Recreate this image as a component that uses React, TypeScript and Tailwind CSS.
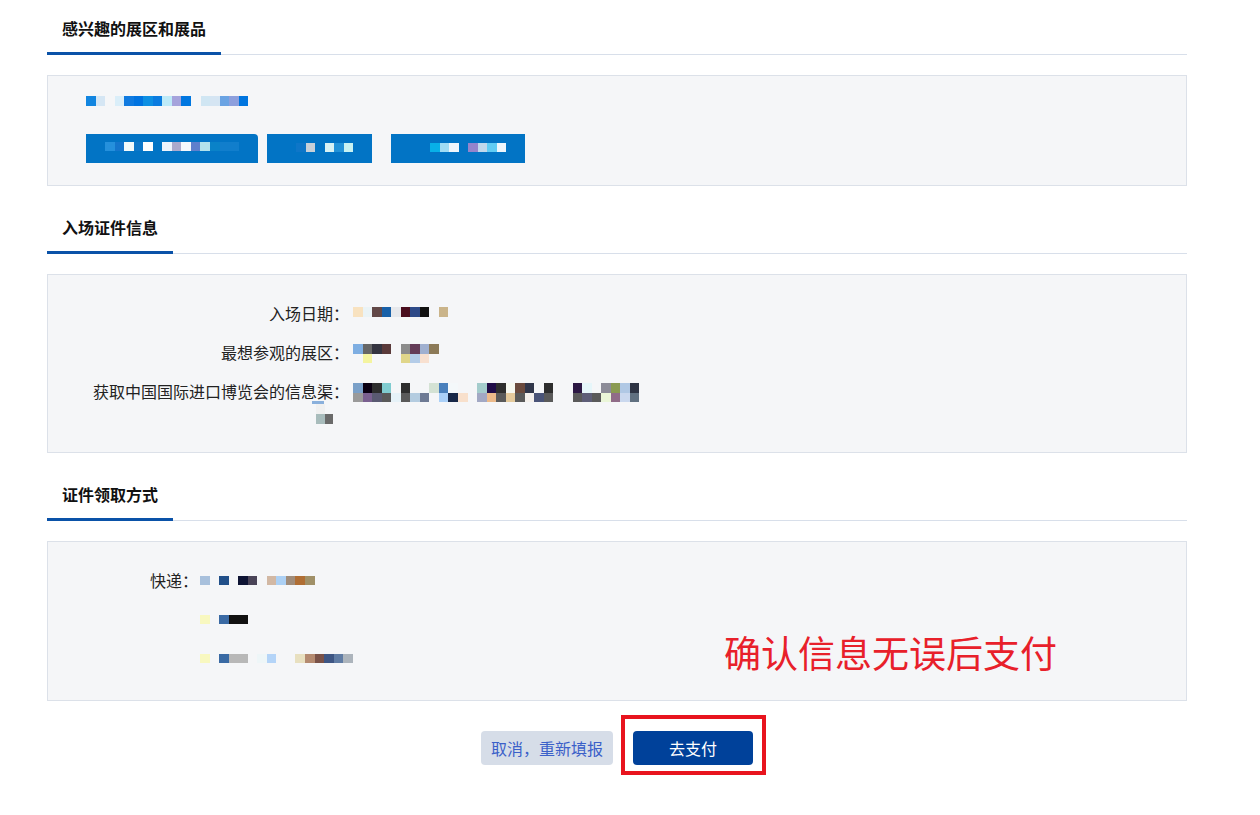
import type { ReactNode } from 'react';

// Pixelated (mosaic) content blocks, one string per row: colours split by spaces, '-' = empty cell
const INTEREST_ROW = [
  '#1185e0 #d5e6f4 - #daeef9 #0f7ae0 #0073e0 #0d8fe3 #0a7ce0 #bdeaf8 #a5a3dc #0077e0 - #d0e6f3 #d5e5f3 #6aa3e3 #8d9fdd #0075df',
];

const TAGS = [
  { w: 172, pl: 19, pt: 8, rows: ['#2590dc #1475cc #f3fafa #0e77c8 #ffffff - #eef4fc #aca9cc #f5f8fc #5f7fcc #b2e2ec #0a82c8 #117ecc #117ecc'] },
  { w: 105, pl: 29, pt: 9, rows: ['#0e76c8 #c8d0d8 - #d8f2f4 #2292d8 #c8f2f2'] },
  { w: 134, pl: 39, pt: 9, rows: ['#08b0e8 #a0dcf4 #f0f6fc - #9484cc #c0d8ec #60ccf4 #eef6fc'] },
];

const DATE_ROWS = ['#f8e2c0 #eaf3f6 #624848 #1860a8 #e6e8ec #4a0e1e #2e4a88 #111111 - #cab48a'];

const ZONE_ROWS = [
  '#7eaee2 #666666 #343440 #5a3a3a - #8c8c8c #643c58 #a0b0d0 #8c7a58',
  '- #f4f4a0 - - - #e0d68a #b4cce8 #f8e0d0',
];

const CHANNEL_ROWS = [
  '#7aa0c8 #0a0012 #2e2e2e #80ccd0 - #2e2e2e - - #d4e2d4 #4a80bc #f4f8fa - - #a4cccc #200c48 #2e2e2e #f6f8f0 #6a4a3e #30364a - #2e2e2e - - #2c1844 #e6f6fa - #8c8c98 #8a9a52 #b0c8e4 #2e3444',
  '#9a9a9a #7a6090 #5a5a72 #5a5a5a #e6f2f8 #5a5a5a #b4cce0 #6e7a94 - #aad0f8 #182848 #f8e0cc - #a2a8c4 #ecba8a #5a5a5a #e4ca9c #5a5a5a #f4f0ec #4a5478 #5a5a5a - - #5a5a5a #5e5e78 #5a5a5a #eaf6d8 #906c88 #cad8ee #607080',
];

const EXPRESS_ROWS = [
  ['#a8c0dc - #22508a - #0e1434 #4a4458 - #d2b8a4 #acd0f4 #a08c7a #b06e34 #a09068'],
  ['#f8f8c0 - #3a6aa4 #111111 #111111'],
  ['#f8f8c0 - #3a6aa4 #b8b8b8 #b8b8b8 - #eef6f8 #b4d4f8 - - #e8e0c0 #b48a70 #7a5248 #3e5684 #607ca4 #acb4bc'],
];

function Mosaic({ rows, size = 9.56 }: { rows: string[]; size?: number }) {
  return (
    <div className="flex flex-col">
      {rows.map((row, i) => (
        <div key={i} className="flex">
          {row.split(' ').map((c, j) => (
            <span
              key={j}
              className="block shrink-0"
              style={{ width: size, height: size, background: c === '-' ? 'transparent' : c }}
            />
          ))}
        </div>
      ))}
    </div>
  );
}

function Section({ title, first, children }: { title: string; first?: boolean; children: ReactNode }) {
  return (
    <section className={first ? '' : 'mt-[13px]'}>
      <div className="border-b border-[#d8dfea]">
        <h2 className="m-0 -mb-px inline-block border-b-[3px] border-[#0a52a8] px-[15px] pt-[20px] pb-[16px] text-[16px] leading-[16px] font-bold text-[#111]">
          {title}
        </h2>
      </div>
      {children}
    </section>
  );
}

function Box({ className, children }: { className: string; children: ReactNode }) {
  return (
    <div className={`relative mt-[20px] border border-[#dce1e9] bg-[#f5f6f8] ${className}`}>{children}</div>
  );
}

function InfoRow({ label, children }: { label: ReactNode; children: ReactNode }) {
  return (
    <div className="flex">
      <div className="w-[301px] shrink-0 text-right">{label}</div>
      <div className="ml-[4px] flex h-[39px] items-center">{children}</div>
    </div>
  );
}

export default function App() {
  return (
    <div className="min-h-[815px] bg-white font-['Noto_Sans_CJK_SC','Noto_Sans',sans-serif] text-[16px] text-[#222]">
      <div className="ml-[47px] w-[1140px]">
        <Section title="感兴趣的展区和展品" first>
          <Box className="h-[111px] pt-[20px] pl-[38px]">
            <Mosaic rows={INTEREST_ROW} />
            <div className="mt-[28px] flex">
              {TAGS.map((t, i) => (
                <div
                  key={i}
                  className={`h-[29px] bg-[#0274c5] ${i === 0 ? 'rounded-tr-[4px]' : i === 1 ? 'ml-[9px]' : 'ml-[19px]'}`}
                  style={{ width: t.w, paddingLeft: t.pl, paddingTop: t.pt }}
                >
                  <Mosaic rows={t.rows} />
                </div>
              ))}
            </div>
          </Box>
        </Section>

        <Section title="入场证件信息">
          <Box className="h-[179px] pt-[19px]">
            <InfoRow label={<span className="leading-[39px]">入场日期：</span>}>
              <div className="-mt-[3px]">
                <Mosaic rows={DATE_ROWS} />
              </div>
            </InfoRow>
            <InfoRow label={<span className="leading-[39px]">最想参观的展区：</span>}>
              <div className="mt-[2px]">
                <Mosaic rows={ZONE_ROWS} />
              </div>
            </InfoRow>
            <InfoRow
              label={
                <div className="flex flex-col items-end">
                  <span className="leading-[39px]">获取中国国际进口博览会的信息渠：</span>
                  <div className="-mt-[10px] mr-[16px] flex flex-col">
                    <span className="ml-[-4px] block h-[3px] w-[12px] bg-[#8ab0dc]" />
                    <span className="block h-[10px] w-[8.5px] bg-[#f0f0f0]" />
                    <div className="flex">
                      <span className="block h-[10px] w-[8.5px] bg-[#a8bcbc]" />
                      <span className="block h-[10px] w-[8.5px] bg-[#6a6a6a]" />
                    </div>
                  </div>
                </div>
              }
            >
              <div className="mt-[2px]">
                <Mosaic rows={CHANNEL_ROWS} />
              </div>
            </InfoRow>
          </Box>
        </Section>

        <Section title="证件领取方式">
          <Box className="h-[160px] pt-[18px]">
            {EXPRESS_ROWS.map((rows, i) => (
              <div key={i} className="flex h-[39px] items-center">
                <div className="w-[150px] shrink-0 text-right">{i === 0 ? '快递：' : ''}</div>
                <div className="ml-[2px] mt-[2px]">
                  <Mosaic rows={rows} />
                </div>
              </div>
            ))}
            <p className="absolute top-[92px] left-[676px] m-0 text-[37px] leading-[37px] whitespace-nowrap text-[#e8202a]">
              确认信息无误后支付
            </p>
          </Box>
        </Section>

        <div className="mt-[30px] flex justify-center gap-[20px]">
          <button
            type="button"
            className="h-[34px] w-[132px] rounded-[4px] bg-[#d6dde8] text-[16px] text-[#3b60c9]"
          >
            取消，重新填报
          </button>
          <div className="relative">
            <button
              type="button"
              className="h-[34px] w-[120px] rounded-[4px] bg-[#00419a] text-[16px] text-white"
            >
              去支付
            </button>
            <span className="pointer-events-none absolute -top-[16px] -right-[13px] -bottom-[10px] -left-[12px] border-[4px] border-[#e8141e]" />
          </div>
        </div>
      </div>
    </div>
  );
}
